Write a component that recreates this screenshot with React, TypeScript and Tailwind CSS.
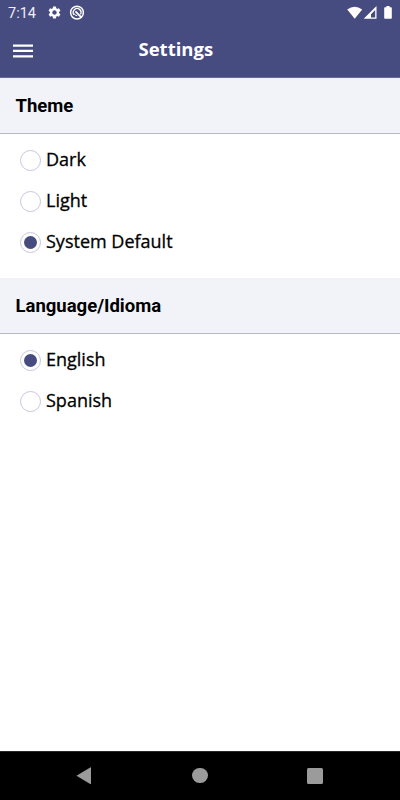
import React from "react";

function StatusBar() {
  return (
    <div className="flex h-6 items-center pl-2 pr-[7px] pt-px text-white">
      <span className="mt-[3px] w-10 font-['Roboto',sans-serif] text-[14.5px] leading-none text-[#eeeef5]">7:14</span>
      <svg className="-ml-px h-[15px] w-[15px]" viewBox="0 0 24 24" fill="currentColor">
        <path d="M19.14 12.94c.04-.3.06-.61.06-.94 0-.32-.02-.64-.07-.94l2.03-1.58c.18-.14.23-.41.12-.61l-1.92-3.32c-.12-.22-.37-.29-.59-.22l-2.39.96c-.5-.38-1.03-.7-1.62-.94l-.36-2.54c-.04-.24-.24-.41-.48-.41h-3.84c-.24 0-.43.17-.47.41l-.36 2.54c-.59.24-1.13.57-1.62.94l-2.39-.96c-.22-.08-.47 0-.59.22L2.74 8.87c-.12.21-.08.47.12.61l2.03 1.58c-.05.3-.09.63-.09.94s.02.64.07.94l-2.03 1.58c-.18.14-.23.41-.12.61l1.92 3.32c.12.22.37.29.59.22l2.39-.96c.5.38 1.03.7 1.62.94l.36 2.54c.05.24.24.41.48.41h3.84c.24 0 .44-.17.47-.41l.36-2.54c.59-.24 1.13-.56 1.62-.94l2.39.96c.22.08.47 0 .59-.22l1.92-3.32c.12-.22.07-.47-.12-.61l-2.01-1.58zM12 15.6c-1.98 0-3.6-1.62-3.6-3.6s1.62-3.6 3.6-3.6 3.6 1.62 3.6 3.6-1.62 3.6-3.6 3.6z" />
      </svg>
      <svg className="ml-[7px] h-4 w-4" viewBox="0 0 16 16" fill="none" stroke="currentColor">
        <circle cx="8" cy="7.6" r="6.4" strokeWidth="1.5" />
        <path d="M5 9.8A3.9 3.9 0 1 1 11.5 9.4" strokeWidth="1.3" />
        <path d="M6.4 6.4L12.4 12.4" strokeWidth="1.8" />
        <path d="M5 8.4Q5.8 10.7 8.3 10.8" strokeWidth="1" />
      </svg>
      <svg className="ml-auto h-[14px] w-[46px]" viewBox="0 0 46 14" fill="currentColor">
        <path d="M.2 3.5Q7.7-1.9 15.2 3.5L7.7 12.8Z" />
        <path fillRule="evenodd" d="M29.5 0V12.8H16.7ZM28.2 4L24 8.3V11.5H28.2Z" />
        <path d="M39.4 0h3.2v1.2h1.5q.7 0 .7.7v10.2q0 .7-.7.7h-6.2q-.7 0-.7-.7V1.9q0-.7.7-.7h1.5Z" />
      </svg>
    </div>
  );
}

function Header() {
  return (
    <header className="h-[78px] shrink-0 border-b border-[#686b99] bg-[#464b80]">
      <StatusBar />
      <div className="flex h-[53px] items-center pl-[13px]">
        <button aria-label="Menu" className="mt-px">
          <svg className="h-[14px] w-5" viewBox="0 0 20 14" fill="white">
            <path d="M0 .5H20V2.7H0ZM0 5.8H20V8H0ZM0 11.2H20V13.4H0Z" />
          </svg>
        </button>
        <h1 className="mb-[3px] ml-[105.5px] text-[18.5px] font-bold leading-6 text-white">Settings</h1>
      </div>
    </header>
  );
}

function SectionTitle({ children }: { children: React.ReactNode }) {
  return (
    <h2 className="flex h-14 items-center border-b border-[#b9bac0] bg-[#f2f3f9] pl-[15.5px] pt-px font-['Roboto',sans-serif] text-[18.5px] font-bold leading-6">
      {children}
    </h2>
  );
}

function Option({ label, selected = false }: { label: string; selected?: boolean }) {
  return (
    <div role="radio" aria-checked={selected} className="flex h-[41px] items-center gap-[5px] pl-5">
      <span className="flex size-[21px] items-center justify-center rounded-full border border-[#c7c6dd]">
        {selected && <span className="size-[13px] rounded-full bg-[#464b80]" />}
      </span>
      <span className="mb-[3px] text-[18px] leading-6 [-webkit-text-stroke:0.3px_black]">{label}</span>
    </div>
  );
}

function NavigationBar() {
  return (
    <nav className="mt-auto flex h-[49px] border-t border-[#292929] bg-black pl-[76px] text-[#9b9b9b]">
      <svg className="mt-[15px] h-[18px] w-[15px]" viewBox="0 0 15 18" fill="currentColor">
        <path d="M.5 8.8L14.2.5Q15 0 15 1V16.5Q15 17.4 14.2 17Z" />
      </svg>
      <span className="ml-[101px] mt-[15.5px] size-[15.5px] rounded-full bg-current" />
      <span className="ml-[99.5px] mt-[15.5px] size-4 rounded-[1.5px] bg-current" />
    </nav>
  );
}

export default function App() {
  return (
    <div className="flex h-[800px] w-[400px] flex-col overflow-hidden bg-white font-['Open_Sans',sans-serif] text-black">
      <Header />
      <section className="h-[200px]">
        <SectionTitle>Theme</SectionTitle>
        <div role="radiogroup" className="pt-[5.5px]">
          <Option label="Dark" />
          <Option label="Light" />
          <Option label="System Default" selected />
        </div>
      </section>
      <section>
        <SectionTitle>Language/Idioma</SectionTitle>
        <div role="radiogroup" className="pt-[5.5px]">
          <Option label="English" selected />
          <Option label="Spanish" />
        </div>
      </section>
      <NavigationBar />
    </div>
  );
}
